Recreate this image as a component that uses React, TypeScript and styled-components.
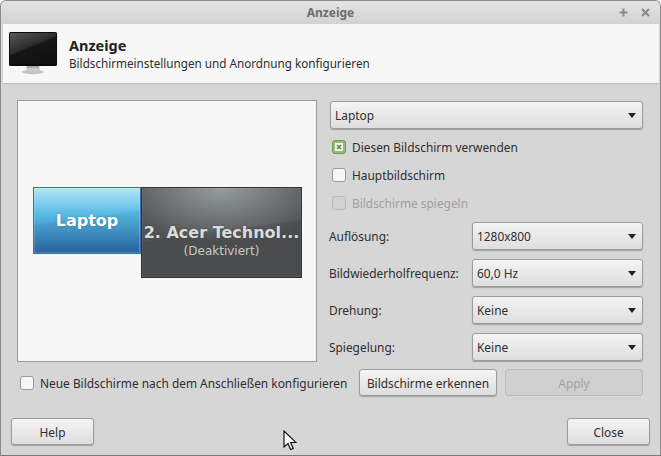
import React from "react";
import styled, { createGlobalStyle } from "styled-components";

const Global = createGlobalStyle`
  html, body {
    margin: 0;
    padding: 0;
    background: #fff;
  }
  body {
    font-family: "Noto Sans", "DejaVu Sans", sans-serif;
    font-size: 11.9px;
    color: #2e2e2e;
  }
`;

const Window = styled.div`
  width: 661px;
  height: 456px;
  box-sizing: border-box;
  border: 1px solid #8a8a8a;
  border-bottom-color: #777;
  border-radius: 6px 6px 0 0;
  background: #d6d6d6;
  display: flex;
  flex-direction: column;
  overflow: hidden;
  position: relative;
`;

const TitleBar = styled.div`
  height: 23px;
  flex: none;
  background: linear-gradient(#e4e4e4, #d2d2d2);
  display: flex;
  align-items: center;
  justify-content: center;
  position: relative;
  font-weight: 700;
  font-size: 12px;
  color: #6e6e6e;
`;

const WinButtons = styled.div`
  position: absolute;
  right: 10px;
  top: 7px;
  display: flex;
  gap: 13px;
  color: #888;
`;

const Header = styled.div`
  height: 60px;
  flex: none;
  margin-left: 2px;
  margin-right: 1px;
  box-sizing: border-box;
  background: #f7f7f7;
  border-bottom: 1px solid #bdbdbd;
  display: flex;
  align-items: center;
  padding-left: 6px;
  gap: 12px;
`;

const HeaderText = styled.div`
  display: flex;
  flex-direction: column;
`;

const HeaderTitle = styled.div`
  font-weight: 700;
  font-size: 14.5px;
  line-height: 18px;
  color: #222;
`;

const HeaderSub = styled.div`
  font-size: 11.7px;
  line-height: 18px;
  color: #2e2e2e;
`;

const Body = styled.div`
  flex: 1;
  display: flex;
  flex-direction: column;
  padding: 16px 17px 0 16px;
`;

const Main = styled.div`
  display: flex;
  align-items: flex-start;
  gap: 13px;
`;

const Canvas = styled.div`
  width: 300px;
  height: 262px;
  box-sizing: border-box;
  background: #f7f7f7;
  border: 1px solid #9a9a9a;
  position: relative;
  flex: none;
`;

const MonitorNode = styled.div<{ $off?: boolean }>`
  position: absolute;
  box-sizing: border-box;
  display: flex;
  flex-direction: column;
  align-items: center;
  justify-content: center;
  overflow: hidden;
  padding-top: ${(p) => (p.$off ? "16px" : "0")};
  font-family: "DejaVu Sans", sans-serif;
  color: ${(p) => (p.$off ? "#dcdcdc" : "#fff")};
  border: 1px solid ${(p) => (p.$off ? "#333" : "#3c6ea8")};
  box-shadow: inset 0 0 0 1px ${(p) => (p.$off ? "rgba(255,255,255,.05)" : "rgba(255,255,255,.18)")};
  background: ${(p) =>
    p.$off
      ? "linear-gradient(172deg, transparent 48%, rgba(0,0,0,.08) 49%), radial-gradient(ellipse 105px 55px at 50% 0, #979c9d, transparent), #505354"
      : "linear-gradient(172deg, transparent 46%, rgba(0,0,0,.05) 47%), linear-gradient(#b4e6f6, #55b8e4 42%, #2a68a8)"};
`;

const NodeName = styled.div`
  font-weight: 700;
  font-size: 16px;
  line-height: 20px;
  white-space: nowrap;
  text-shadow: 0 0 2px rgba(0, 0, 0, 0.25);
`;

const NodeHint = styled.div`
  font-size: 12px;
  line-height: 16px;
  color: #c8c8c8;
`;

const Side = styled.div`
  width: 313px;
  padding-top: 1px;
  display: flex;
  flex-direction: column;
`;

const Btn = styled.button<{ $width?: number }>`
  box-sizing: border-box;
  height: 27px;
  width: ${(p) => (p.$width ? `${p.$width}px` : "auto")};
  border: 1px solid #9c9c9c;
  border-radius: 3px;
  background: linear-gradient(#f4f4f4, #dedede);
  box-shadow: 0 1px 1px rgba(0, 0, 0, 0.25);
  font: inherit;
  color: #2e2e2e;
  padding: 0;
  flex: none;

  &:disabled {
    background: #cfcfcf;
    border-color: #bcbcbc;
    box-shadow: none;
    color: #a2a2a2;
  }
`;

const SelectBox = styled.div`
  box-sizing: border-box;
  height: 28px;
  flex: 1 0 28px;
  border: 1px solid #9c9c9c;
  border-radius: 3px;
  background: linear-gradient(#f4f4f4, #dedede);
  box-shadow: 0 1px 1px rgba(0, 0, 0, 0.25);
  display: flex;
  align-items: center;
  justify-content: space-between;
  padding: 0 6px 0 4px;
`;

const Arrow = styled.span`
  width: 0;
  height: 0;
  border-left: 4px solid transparent;
  border-right: 4px solid transparent;
  border-top: 5px solid #222;
`;

const CheckRow = styled.label<{ $off?: boolean }>`
  height: 28px;
  display: flex;
  align-items: center;
  gap: 6px;
  padding-left: 2px;
  color: ${(p) => (p.$off ? "#a0a0a0" : "#2e2e2e")};
`;

const Box = styled.span<{ $off?: boolean; $checked?: boolean }>`
  box-sizing: border-box;
  width: 14px;
  height: 14px;
  border-radius: 3px;
  flex: none;
  display: flex;
  align-items: center;
  justify-content: center;
  border: 1px solid ${(p) => (p.$checked ? "#6c9a52" : p.$off ? "#b8b8b8" : "#9a9a9a")};
  background: ${(p) => (p.$checked ? "#9ab87c" : p.$off ? "#d2d2d2" : "#f6f6f6")};
`;

const Checks = styled.div`
  display: flex;
  flex-direction: column;
  margin-top: 4px;
  margin-bottom: 5px;
`;

const Rows = styled.div`
  display: flex;
  flex-direction: column;
  gap: 9px;
`;

const Row = styled.div`
  display: flex;
  align-items: center;
`;

const RowLabel = styled.span`
  width: 142px;
  margin-left: -1px;
  margin-right: 1px;
  flex: none;
`;

const LowerRow = styled.div`
  display: flex;
  align-items: center;
  margin-top: 7px;
  height: 27px;
`;

const NewCheck = styled.label`
  display: flex;
  align-items: center;
  gap: 6px;
  padding-left: 3px;
  width: 342px;
  margin-right: -3px;
  flex: none;
`;

const ApplyBtn = styled(Btn)`
  margin-left: 8px;
`;

const Footer = styled.div`
  margin-bottom: 10px;
  padding: 0 10px;
  display: flex;
  justify-content: space-between;
`;

const Pointer = styled.svg`
  position: absolute;
  left: 282px;
  top: 429px;
`;

const MonitorIcon = () => (
  <svg width="48" height="43" viewBox="0 0 48 43">
    <defs>
      <linearGradient id="scr" x1="0" y1="0" x2="0.6" y2="1">
        <stop offset="0" stopColor="#5a5a5a" />
        <stop offset="0.5" stopColor="#2c2c2c" />
        <stop offset="0.55" stopColor="#161616" />
        <stop offset="1" stopColor="#111" />
      </linearGradient>
      <linearGradient id="stand" x1="0" y1="0" x2="0" y2="1">
        <stop offset="0" stopColor="#8a8a8a" />
        <stop offset="1" stopColor="#e6e6e6" />
      </linearGradient>
    </defs>
    <path d="M18 33h12l1 6H17z" fill="url(#stand)" />
    <ellipse cx="24" cy="40" rx="11" ry="2.2" fill="#c4c4c4" />
    <rect x="0" y="0" width="48" height="34" rx="1.5" fill="#0a0a0a" />
    <rect x="1" y="1" width="46" height="31" fill="url(#scr)" />
  </svg>
);

const Select = ({ value }: { value: string }) => (
  <SelectBox>
    <span>{value}</span>
    <Arrow />
  </SelectBox>
);

const settings = [
  { label: "Auflösung:", value: "1280x800" },
  { label: "Bildwiederholfrequenz:", value: "60,0 Hz" },
  { label: "Drehung:", value: "Keine" },
  { label: "Spiegelung:", value: "Keine" },
];

const App = () => {
  return (
    <>
      <Global />
      <Window>
        <TitleBar>
          Anzeige
          <WinButtons>
            <svg width="9" height="9" viewBox="0 0 9 9">
              <path d="M4.5 0.5v8M0.5 4.5h8" stroke="currentColor" strokeWidth="2" />
            </svg>
            <svg width="9" height="9" viewBox="0 0 9 9">
              <path d="M1 1l7 7M8 1l-7 7" stroke="currentColor" strokeWidth="2" />
            </svg>
          </WinButtons>
        </TitleBar>
        <Header>
          <MonitorIcon />
          <HeaderText>
            <HeaderTitle>Anzeige</HeaderTitle>
            <HeaderSub>Bildschirmeinstellungen und Anordnung konfigurieren</HeaderSub>
          </HeaderText>
        </Header>
        <Body>
          <Main>
            <Canvas>
              <MonitorNode style={{ left: 15, top: 86, width: 108, height: 67 }}>
                <NodeName>Laptop</NodeName>
              </MonitorNode>
              <MonitorNode $off style={{ left: 123, top: 86, width: 161, height: 91 }}>
                <NodeName>2. Acer Technol...</NodeName>
                <NodeHint>(Deaktiviert)</NodeHint>
              </MonitorNode>
            </Canvas>
            <Side>
              <Select value="Laptop" />
              <Checks>
                <CheckRow>
                  <Box $checked>
                    <svg width="8" height="8" viewBox="0 0 8 8">
                      <rect width="8" height="8" fill="#f4f6ee" />
                      <path d="M2 2l4 4M6 2L2 6" stroke="#5f8a45" strokeWidth="1.6" />
                    </svg>
                  </Box>
                  Diesen Bildschirm verwenden
                </CheckRow>
                <CheckRow>
                  <Box />
                  Hauptbildschirm
                </CheckRow>
                <CheckRow $off>
                  <Box $off />
                  Bildschirme spiegeln
                </CheckRow>
              </Checks>
              <Rows>
                {settings.map((s) => (
                  <Row key={s.label}>
                    <RowLabel>{s.label}</RowLabel>
                    <Select value={s.value} />
                  </Row>
                ))}
              </Rows>
            </Side>
          </Main>
          <LowerRow>
            <NewCheck>
              <Box />
              Neue Bildschirme nach dem Anschließen konfigurieren
            </NewCheck>
            <Btn $width={138}>Bildschirme erkennen</Btn>
            <ApplyBtn $width={138} disabled>
              Apply
            </ApplyBtn>
          </LowerRow>
        </Body>
        <Footer>
          <Btn $width={83}>Help</Btn>
          <Btn $width={83}>Close</Btn>
        </Footer>
        <Pointer width="14" height="22" viewBox="0 0 14 22">
          <path d="M1 1v16l4-3.5 2.6 6 2.6-1.1-2.6-5.9h5.4z" fill="#fff" stroke="#111" strokeWidth="1.2" />
        </Pointer>
      </Window>
    </>
  );
};

export default App;
